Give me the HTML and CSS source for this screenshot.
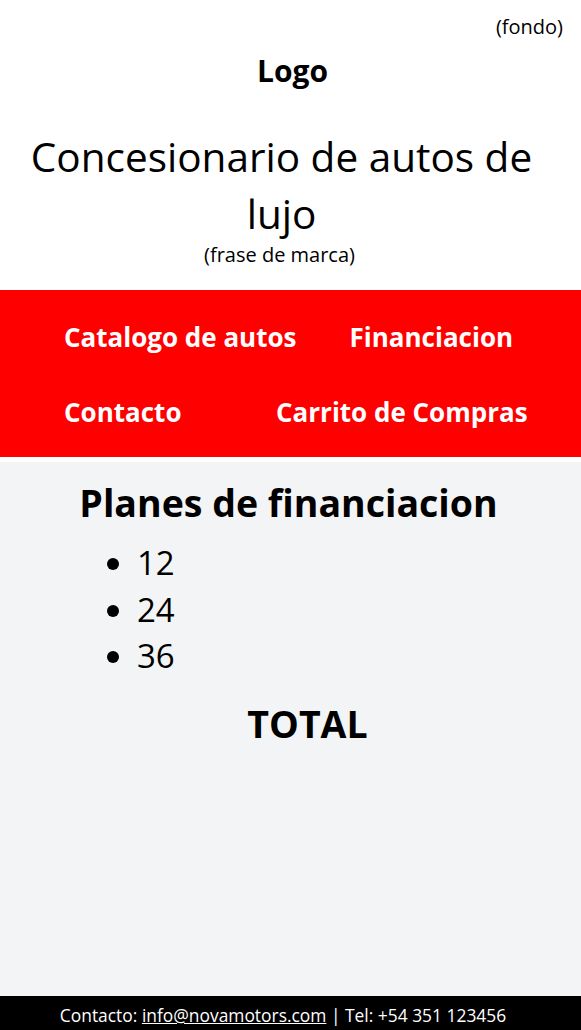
FILE: index.html
```html
<!DOCTYPE html>
<html lang="es">
<head>
<meta charset="utf-8">
<title>Concesionario</title>
<link rel="stylesheet" href="styles.css">
</head>
<body>
<header class="header">
  <p class="fondo">(fondo)</p>
  <p class="logo">Logo</p>
  <h1 class="title">Concesionario de autos de lujo</h1>
  <p class="tagline">(frase de marca)</p>
</header>
<nav class="nav">
  <ul class="nav-list">
    <li class="nav-item"><a href="#">Catalogo de autos</a></li>
    <li class="nav-item"><a href="#">Financiacion</a></li>
    <li class="nav-item"><a href="#">Contacto</a></li>
    <li class="nav-item"><a href="#">Carrito de Compras</a></li>
  </ul>
</nav>
<main class="main">
  <h2 class="plans-title">Planes de financiacion</h2>
  <ul class="plans">
    <li>12</li>
    <li>24</li>
    <li>36</li>
  </ul>
  <h2 class="total">TOTAL</h2>
</main>
<footer class="footer">
  Contacto: <a href="#">info@novamotors.com</a> | Tel: +54 351 123456
</footer>
</body>
</html>
```
FILE: styles.css
```css
* { box-sizing: border-box; }
html, body { margin: 0; padding: 0; }
body {
  font-family: "Open Sans", "Liberation Sans", sans-serif;
  color: #000;
  background: #fff;
  display: flex;
  flex-direction: column;
  min-height: 1030px;
}
.header {
  text-align: center;
  padding: 14px 18px 22px 0;
}
.fondo {
  margin: 0;
  text-align: right;
  font-size: 20px;
  line-height: 26px;
}
.logo {
  margin: 11px 0 0;
  padding-left: 22px;
  font-size: 30px;
  font-weight: 700;
  line-height: 40px;
}
.title {
  margin: 37px 0 0;
  font-size: 40.5px;
  font-weight: 400;
  line-height: 57px;
}
.tagline {
  margin: 0;
  padding-right: 4px;
  font-size: 20px;
  line-height: 26px;
}
.nav {
  background: #ff0000;
  padding: 30px 0 27px;
  margin-bottom: 5px;
}
.nav-list {
  list-style: none;
  margin: 0;
  padding: 0 0 0 64px;
  display: flex;
  flex-wrap: wrap;
  column-gap: 53px;
  row-gap: 40px;
}
.nav-item { min-width: 159px; }
.nav-item a {
  color: #fff;
  text-decoration: none;
  font-weight: 700;
  font-size: 26px;
  line-height: 35px;
}
.main {
  flex: 1;
  background: #f3f4f6;
  padding: 18px 0;
}
.plans-title {
  margin: 0;
  padding-right: 4px;
  text-align: center;
  font-size: 37.5px;
  font-weight: 700;
  line-height: 46px;
}
.plans {
  margin: 14px 0 0;
  padding-left: 137px;
  font-size: 33px;
  line-height: 46.5px;
}
.total {
  margin: 21px 0 0;
  text-align: center;
  padding-left: 34px;
  font-size: 37.5px;
  font-weight: 700;
  line-height: 46px;
}
.footer {
  background: #000;
  color: #fff;
  text-align: center;
  font-size: 17.4px;
  line-height: 39px;
  height: 34px;
  padding-right: 15px;
  overflow: hidden;
}
.footer a { color: #fff; }
```
